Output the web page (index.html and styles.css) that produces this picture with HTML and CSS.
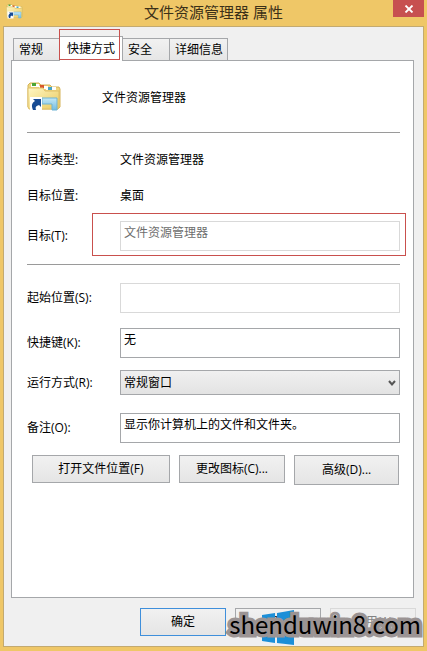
FILE: index.html
```html
<!DOCTYPE html>
<html lang="zh-CN">
<head>
    <meta charset="UTF-8">
    <meta name="viewport" content="width=device-width, initial-scale=1.0">
    <title>文件资源管理器 属性</title>
    <link rel="stylesheet" href="styles.css">
</head>
<body>
    <div class="window">
        <header class="title-bar">
            <svg class="title-icon" viewBox="0 0 34 32" aria-hidden="true"><use href="#folder-icon"/></svg>
            <h1>文件资源管理器 属性</h1>
            <button class="close-btn" type="button" aria-label="关闭">
                <svg width="10" height="8" viewBox="0 0 10 8"><path d="M1.5 .5l7 7M8.5 .5l-7 7" stroke="#fff" stroke-width="1.8"/></svg>
            </button>
        </header>

        <form class="client">
            <div class="tabs" role="tablist">
                <button class="tab tab-general" type="button" role="tab">常规</button>
                <button class="tab tab-shortcut active" type="button" role="tab" aria-selected="true">快捷方式</button>
                <button class="tab tab-security" type="button" role="tab">安全</button>
                <button class="tab tab-details" type="button" role="tab">详细信息</button>
            </div>

            <div class="panel">
                <div class="summary">
                    <svg class="folder" viewBox="0 0 34 32" aria-hidden="true">
                        <defs>
                            <linearGradient id="folder-fill" x1="0" y1="0" x2="1" y2="1">
                                <stop offset="0" stop-color="#fff7c4"/>
                                <stop offset="1" stop-color="#e9c95f"/>
                            </linearGradient>
                            <linearGradient id="stand-fill" x1="0" y1="0" x2="0" y2="1">
                                <stop offset="0" stop-color="#c3e8f6"/>
                                <stop offset="1" stop-color="#74bce0"/>
                            </linearGradient>
                        </defs>
                        <g id="folder-icon">
                            <path d="M1 25V3l2-2h9l2 2h9l2 2h7l1 2v18l-2 2H3z" fill="#efd67e" stroke="#d5b45a"/>
                            <path d="M4 2h8v3H4zM12 4h9v3h-9z" fill="#fff"/>
                            <path d="M5 1h4v3H5z" fill="#4ba535"/>
                            <path d="M13 3h4v3h-4z" fill="#d9572c"/>
                            <path d="M1 6h15l2 3h14v16l-1 2H2l-1-2z" fill="url(#folder-fill)" stroke="#dfc06a"/>
                            <path d="M19 5h10v3H19z" fill="#fff"/>
                            <path d="M21 5h4v3h-4z" fill="#45a5c4"/>
                            <path d="M15 16h15v12h-5v-6H15z" fill="url(#stand-fill)" stroke="#6eb3d4"/>
                            <path d="M3 15h12v14H3z" fill="#fff"/>
                            <path d="M6 28c-2-5-1-7 2-9l-2-2h8v8l-2-2c-3 1-4 2-3 5z" fill="#174b94"/>
                        </g>
                    </svg>
                    <span>文件资源管理器</span>
                </div>

                <hr>

                <div class="row info">
                    <span>目标类型:</span>
                    <span>文件资源管理器</span>
                </div>
                <div class="row info">
                    <span>目标位置:</span>
                    <span>桌面</span>
                </div>
                <div class="row target">
                    <label for="target">目标(T):</label>
                    <input id="target" type="text" value="文件资源管理器" disabled>
                </div>

                <hr>

                <div class="row start">
                    <label for="start">起始位置(S):</label>
                    <input id="start" type="text" disabled>
                </div>
                <div class="row">
                    <label for="hotkey">快捷键(K):</label>
                    <input id="hotkey" type="text" value="无">
                </div>
                <div class="row run">
                    <label for="run">运行方式(R):</label>
                    <div class="select">
                        <select id="run">
                            <option>常规窗口</option>
                            <option>最小化</option>
                            <option>最大化</option>
                        </select>
                        <svg width="8" height="7" viewBox="0 0 8 7" aria-hidden="true"><path d="M1 1l3 3.5L7 1" fill="none" stroke="#555" stroke-width="2"/></svg>
                    </div>
                </div>
                <div class="row">
                    <label for="comment">备注(O):</label>
                    <input id="comment" type="text" value="显示你计算机上的文件和文件夹。">
                </div>

                <div class="actions">
                    <button class="open-location" type="button">打开文件位置(F)</button>
                    <button class="change-icon" type="button">更改图标(C)...</button>
                    <button class="advanced" type="button">高级(D)...</button>
                </div>
            </div>

            <div class="footer">
                <button class="ok" type="submit">确定</button>
                <button type="button">取消</button>
                <button type="button" disabled>应用(A)</button>
                <div class="watermark">
                    <svg width="34" height="36" viewBox="0 0 34 36" aria-hidden="true">
                        <path d="M0 5l13-2v13H0zM15 3l17-3v16H15zM0 20h13v13L0 31zM15 20h17v15l-17-2z" fill="#1c8fd8"/>
                    </svg>
                    <span>shenduwin8.com</span>
                </div>
            </div>
        </form>
    </div>
</body>
</html>
```

FILE: styles.css
```css
:root {
    --frame: #efc767;
    --frame-line: #c3aa70;
    --client-bg: #f0f0f0;
    --line: #a5a7aa;
    --light-line: #d9d9d9;
    --red: #c9504d;
}

* {
    box-sizing: border-box;
}

body {
    margin: 0;
    font-family: "Open Sans", "Noto Sans CJK SC", sans-serif;
    font-size: 12px;
    line-height: 16px;
    color: #000;
}

button,
input,
select {
    font: inherit;
    color: inherit;
    border-radius: 0;
    margin: 0;
}

.window {
    display: flex;
    flex-direction: column;
    min-height: 100vh;
    padding: 0 3px 4px;
    background-color: var(--frame);
}

.title-bar {
    display: grid;
    grid-template-columns: 31px 1fr 31px;
    align-items: start;
    height: 26px;
}

.title-icon {
    width: 17px;
    height: 16px;
    margin: 4px 0 0 3px;
}

.title-bar h1 {
    margin: 0;
    font-size: 15px;
    font-weight: 400;
    line-height: 24px;
    text-align: center;
    color: #3b3018;
}

.close-btn {
    display: flex;
    align-items: center;
    justify-content: center;
    height: 17px;
    padding: 0;
    border: 0;
    background-color: #c75050;
}

.client {
    display: flex;
    flex-direction: column;
    flex: 1;
    padding: 9px 9px 10px 7px;
    border: 1px solid var(--frame-line);
    background-color: var(--client-bg);
}

.tabs {
    display: flex;
    align-items: flex-end;
    height: 24px;
    padding-left: 2px;
}

.tab {
    height: 22px;
    padding: 0 0 0 5px;
    border: 1px solid var(--line);
    border-left-width: 0;
    border-bottom: 0;
    background: linear-gradient(#f1f1f1, #e6e6e6);
    text-align: left;
}

.tab-general {
    width: 47px;
    border-left-width: 1px;
    border-right-width: 0;
}

.tab-shortcut {
    width: 63px;
    padding-left: 7px;
}

.tab-security {
    width: 47px;
}

.tab-details {
    width: 58px;
}

.tab.active {
    position: relative;
    height: 25px;
    margin-bottom: -1px;
    background: #fff;
}

/* red marker round the tab */
.tab.active::after {
    content: "";
    position: absolute;
    top: -8px;
    left: -1px;
    right: 2px;
    bottom: 1px;
    border: 1px solid var(--red);
}

.panel {
    flex: 1;
    padding: 18px 13px 0 15px;
    border: 1px solid var(--line);
    background-color: #fff;
}

.summary {
    display: flex;
    align-items: center;
    gap: 41px;
    height: 38px;
}

.folder {
    width: 34px;
    height: 32px;
}

hr {
    height: 1px;
    margin: 15px 0 9px;
    border: 0;
    background-color: #9a9a9a;
}

.row {
    display: grid;
    grid-template-columns: 93px 1fr;
    align-items: center;
    margin-bottom: 12px;
}

.info {
    height: 36px;
    margin: 0;
}

.row input {
    width: 100%;
    height: 30px;
    padding: 0 3px 8px;
    border: 1px solid var(--line);
    background-color: #fff;
}

.row input:disabled {
    border-color: var(--light-line);
    color: #6d6d6d;
}

.target {
    position: relative;
    margin: 7px 0 -2px;
}

/* red marker round the target field */
.target::after {
    content: "";
    position: absolute;
    inset: -8px -6px -5px 65px;
    border: 1px solid var(--red);
    pointer-events: none;
}

.start {
    margin: 18px 0 15px;
}

.select {
    position: relative;
}

.select select {
    display: block;
    width: 100%;
    height: 25px;
    padding: 0 3px;
    border: 1px solid var(--line);
    background: linear-gradient(#f0f0f0, #e3e3e3);
    appearance: none;
}

.select svg {
    position: absolute;
    top: 10px;
    right: 4px;
    pointer-events: none;
}

.run {
    margin-bottom: 18px;
}

.actions {
    display: grid;
    grid-template-columns: 138fr 107fr 105fr;
    gap: 9px;
    padding: 0 1px 0 5px;
}

.actions button,
.footer button {
    height: 28px;
    padding: 0;
    border: 1px solid var(--line);
    background: linear-gradient(#f1f1f1, #e5e5e5);
}

.actions .advanced {
    height: 30px;
}

.footer {
    position: relative;
    display: flex;
    justify-content: flex-end;
    gap: 9px;
    margin-top: 10px;
    margin-right: -2px;
}

.footer button {
    width: 86px;
}

.footer .ok {
    border-color: #3f8fdb;
}

.footer button:disabled {
    border-color: var(--light-line);
    background: #efefef;
    color: #838383;
}

.watermark {
    position: absolute;
    top: 0;
    right: -5px;
    font-family: "Noto Sans CJK SC", sans-serif;
    font-size: 24px;
    line-height: 32px;
    -webkit-text-stroke: 7px #9b9494;
    paint-order: stroke fill;
    pointer-events: none;
}

.watermark svg {
    position: absolute;
    top: 2px;
    left: 33px;
}

.watermark span {
    position: relative;
}
```
